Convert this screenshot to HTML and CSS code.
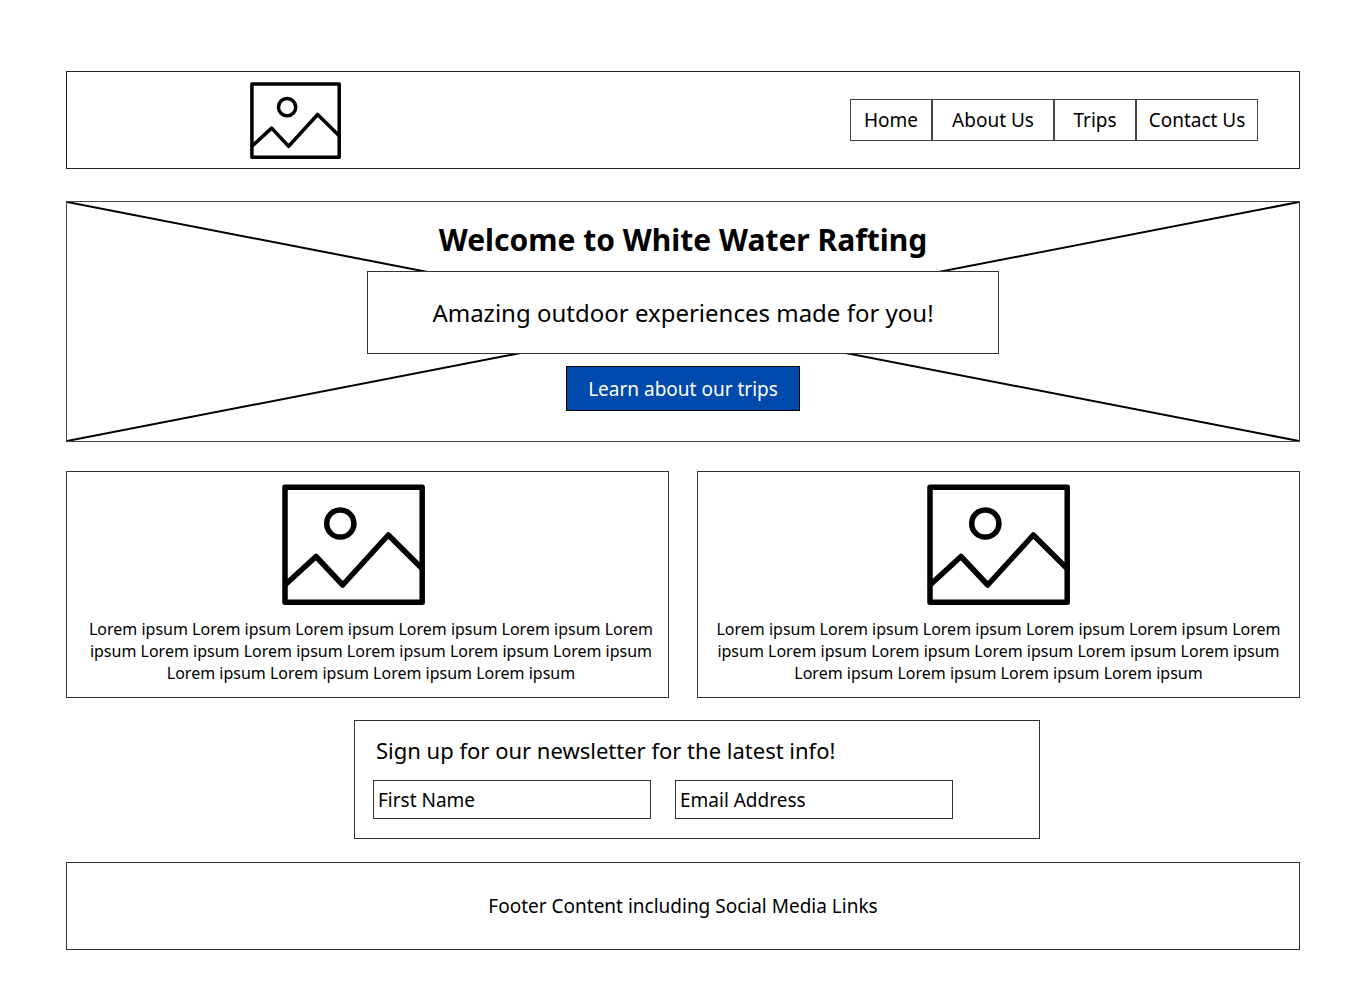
FILE: index.html
```html
<!DOCTYPE html>
<html lang="en">
<head>
<meta charset="utf-8">
<meta name="viewport" content="width=device-width, initial-scale=1">
<title>White Water Rafting</title>
<link rel="stylesheet" href="styles.css">
</head>
<body>
<svg class="symbols" aria-hidden="true">
  <symbol id="picture" viewBox="0 0 143 121">
    <g fill="none" stroke="#000" stroke-width="5.5" stroke-linejoin="round" stroke-linecap="round">
      <rect x="3" y="3.2" width="137.2" height="115"/>
      <circle cx="58.3" cy="39.5" r="13.6"/>
      <path d="M3.5 100.5 34 72.5 60.7 101 106.3 51 140.5 85"/>
    </g>
  </symbol>
</svg>
<div class="page">
  <header class="header">
    <svg class="logo" role="img" aria-label="Logo"><use href="#picture"/></svg>
    <nav class="nav">
      <a class="nav-link" href="#home">Home</a>
      <a class="nav-link nav-link-wide" href="#about">About Us</a>
      <a class="nav-link" href="#trips">Trips</a>
      <a class="nav-link nav-link-wide" href="#contact">Contact Us</a>
    </nav>
  </header>
  <main>
    <section class="hero">
      <svg class="hero-cross" viewBox="0 0 100 100" preserveAspectRatio="none" aria-hidden="true">
        <path d="M0 0 100 100M0 100 100 0"/>
      </svg>
      <h1 class="hero-title">Welcome to White Water Rafting</h1>
      <p class="hero-text">Amazing outdoor experiences made for you!</p>
      <button class="hero-button" type="button">Learn about our trips</button>
    </section>
    <div class="cards">
      <article class="card card-first">
        <svg class="card-picture" role="img" aria-label="Picture"><use href="#picture"/></svg>
        <p class="card-text">Lorem ipsum Lorem ipsum Lorem ipsum Lorem ipsum Lorem ipsum Lorem ipsum Lorem ipsum Lorem ipsum Lorem ipsum Lorem ipsum Lorem ipsum Lorem ipsum Lorem ipsum Lorem ipsum Lorem ipsum</p>
      </article>
      <article class="card">
        <svg class="card-picture" role="img" aria-label="Picture"><use href="#picture"/></svg>
        <p class="card-text">Lorem ipsum Lorem ipsum Lorem ipsum Lorem ipsum Lorem ipsum Lorem ipsum Lorem ipsum Lorem ipsum Lorem ipsum Lorem ipsum Lorem ipsum Lorem ipsum Lorem ipsum Lorem ipsum Lorem ipsum</p>
      </article>
    </div>
    <div class="signup">
      <form class="newsletter">
        <h2 class="newsletter-title">Sign up for our newsletter for the latest info!</h2>
        <div class="fields">
          <input class="field" type="text" placeholder="First Name" aria-label="First Name">
          <input class="field" type="email" placeholder="Email Address" aria-label="Email Address">
        </div>
      </form>
    </div>
  </main>
  <footer class="footer">Footer Content including Social Media Links</footer>
</div>
</body>
</html>
```
FILE: styles.css
```css
* {
  box-sizing: border-box;
}

body {
  margin: 0;
  background: #fff;
  color: #000;
  font-family: "Noto Sans", "Open Sans", sans-serif;
  font-size: 19px;
}

h1, h2, p {
  margin: 0;
  font-weight: 400;
}

.symbols {
  display: none;
}

.page {
  padding: 71px 66px 50px;
}

.header {
  display: flex;
  align-items: center;
  justify-content: space-between;
  min-height: 98px;
  padding: 0 41px 0 183px;
  border: 1px solid #222;
}

.logo {
  width: 91px;
  height: 77px;
}

.nav {
  display: flex;
}

.nav-link {
  min-width: 82px;
  padding: 6px 0;
  border: 1px solid #444;
  color: #000;
  line-height: 28px;
  text-align: center;
  text-decoration: none;
}

.nav-link-wide {
  min-width: 122px;
}

.hero {
  position: relative;
  display: flex;
  flex-direction: column;
  align-items: center;
  margin-top: 32px;
  padding: 15px 20px 30px;
  border: 1px solid #444;
}

.hero-cross {
  position: absolute;
  inset: 0;
  width: 100%;
  height: 100%;
  fill: none;
  stroke: #000;
  stroke-width: 2px;
}

.hero-cross path {
  vector-effect: non-scaling-stroke;
}

.hero-title,
.hero-text,
.hero-button {
  position: relative;
}

.hero-title {
  font-size: 30px;
  font-weight: 700;
  line-height: 46px;
}

.hero-text {
  width: 100%;
  max-width: 632px;
  margin-top: 8px;
  padding: 20px;
  border: 1px solid #333;
  background: #fff;
  font-size: 24px;
  line-height: 41px;
  text-align: center;
}

.hero-button {
  min-width: 234px;
  margin-top: 12px;
  padding: 8px 16px 6px;
  border: 1px solid #000;
  background: #004aad;
  color: #fff;
  font: inherit;
  line-height: 29px;
}

.cards {
  display: grid;
  grid-template-columns: 1fr 1fr;
  gap: 28px;
  margin-top: 29px;
}

.card {
  display: flex;
  flex-direction: column;
  align-items: center;
  padding: 12px 11px 13px;
  border: 1px solid #333;
}

.card-first {
  padding-left: 18px;
}

.card-picture {
  width: 143px;
  height: 121px;
}

.card-first .card-picture {
  margin-right: 36px;
}

.card-text {
  margin-top: 13px;
  font-size: 16px;
  line-height: 22px;
  text-align: center;
}

.signup {
  display: flex;
  justify-content: center;
  padding: 22px 0 23px 28px;
}

.newsletter {
  width: 686px;
  padding: 14px 18px 19px;
  border: 1px solid #333;
}

.newsletter-title {
  padding-left: 3px;
  font-size: 22px;
  line-height: 30px;
}

.fields {
  display: flex;
  gap: 24px;
  margin-top: 15px;
}

.field {
  width: 278px;
  min-width: 0;
  height: 39px;
  padding: 0 4px;
  border: 1px solid #333;
  border-radius: 0;
  background: #fff;
  color: #000;
  font: inherit;
}

.field::placeholder {
  color: #000;
  opacity: 1;
}

.footer {
  padding: 29px 20px;
  border: 1px solid #333;
  line-height: 28px;
  text-align: center;
}
```
